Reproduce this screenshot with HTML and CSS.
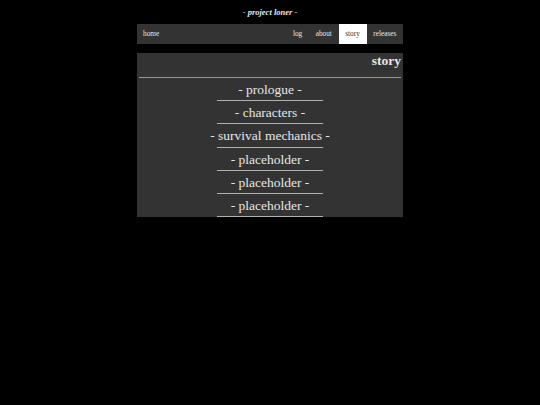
FILE: index.html
```html
<!DOCTYPE html>
<html>
<head>
<meta charset="utf-8">
<link rel="stylesheet" href="styles.css">
</head>
<body>
<div class="title">- project loner -</div>
<nav class="nav">
  <a class="nav-link home">home</a>
  <span class="spacer"></span>
  <a class="nav-link">log</a>
  <a class="nav-link">about</a>
  <a class="nav-link active">story</a>
  <a class="nav-link">releases</a>
</nav>
<main class="panel">
  <h1 class="panel-title">story</h1>
  <div class="rule"></div>
  <ul class="chapters">
    <li class="chapter"><span>- prologue -</span></li>
    <li class="chapter"><span>- characters -</span></li>
    <li class="chapter"><span>- survival mechanics -</span></li>
    <li class="chapter"><span>- placeholder -</span></li>
    <li class="chapter"><span>- placeholder -</span></li>
    <li class="chapter"><span>- placeholder -</span></li>
  </ul>
</main>
</body>
</html>
```
FILE: styles.css
```css
html, body {
  margin: 0;
  padding: 0;
  background: #000;
}
body {
  font-family: "Liberation Serif", "Times New Roman", serif;
  color: #e6e6e6;
}
.title {
  text-align: center;
  font-weight: bold;
  font-style: italic;
  font-size: 8.5px;
  line-height: 10px;
  padding-top: 7px;
  height: 16.5px;
}
.nav {
  width: 266px;
  margin: 0 auto;
  height: 20px;
  background: #333;
  display: flex;
  font-size: 7.3px;
  line-height: 20px;
}
.nav-link {
  padding: 0 6.7px;
  color: #e6e6e6;
}
.nav-link.home {
  padding-left: 6px;
}
.nav-link.active {
  background: #fff;
  color: #333;
}
.spacer {
  flex: 1;
}
.panel {
  display: block;
  width: 266px;
  height: 164px;
  margin: 9.5px auto 0;
  background: #333;
}
.panel-title {
  margin: 0;
  padding: 0 2px 0 0;
  text-align: right;
  font-size: 13.5px;
  line-height: 16px;
  font-weight: bold;
}
.rule {
  margin: 8px 2px 0;
  border-top: 1.5px solid #999;
}
.chapters {
  list-style: none;
  margin: 0;
  padding: 0;
}
.chapter {
  width: 106px;
  margin: 0 auto;
  display: flex;
  justify-content: center;
  white-space: nowrap;
  font-size: 13.5px;
  line-height: 16px;
  height: 16px;
  padding: 4px 0 2.2px;
  border-bottom: 1px solid #b0b0b0;
}
.chapter span {
  flex: none;
}
```
